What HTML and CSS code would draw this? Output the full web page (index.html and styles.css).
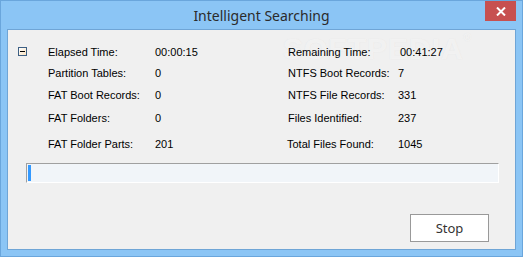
FILE: index.html
```html
<!DOCTYPE html>
<html lang="en">
<head>
    <meta charset="UTF-8">
    <title>Intelligent Searching</title>
    <link rel="stylesheet" href="styles.css">
</head>
<body>
    <div class="window">
        <div class="titlebar">
            <div class="title">Intelligent Searching</div>
            <div class="close-btn">
                <svg width="10" height="9" viewBox="0 0 10 9">
                    <path d="M1 0.5 L9 8.5 M9 0.5 L1 8.5" stroke="#fff" stroke-width="2"/>
                </svg>
            </div>
        </div>

        <div class="client">
            <div class="watermark">SOFTPEDIA<sup>®</sup></div>

            <div class="stats">
                <span class="toggle"><span class="toggle-minus"></span></span>
                <span class="label">Elapsed Time:</span>
                <span class="value">00:00:15</span>
                <span class="label">Remaining Time:</span>
                <span class="value value-shift">00:41:27</span>

                <span></span>
                <span class="label">Partition Tables:</span>
                <span class="value">0</span>
                <span class="label">NTFS Boot Records:</span>
                <span class="value">7</span>

                <span></span>
                <span class="label">FAT Boot Records:</span>
                <span class="value">0</span>
                <span class="label">NTFS File Records:</span>
                <span class="value">331</span>

                <span></span>
                <span class="label">FAT Folders:</span>
                <span class="value">0</span>
                <span class="label">Files Identified:</span>
                <span class="value">237</span>

                <span></span>
                <span class="label">FAT Folder Parts:</span>
                <span class="value">201</span>
                <span class="label label-shift">Total Files Found:</span>
                <span class="value">1045</span>
            </div>

            <div class="progress">
                <div class="progress-chunk"></div>
            </div>

            <div class="actions">
                <button class="stop-btn">Stop</button>
            </div>
        </div>
    </div>
</body>
</html>
```

FILE: styles.css
```css
* {
    margin: 0;
    padding: 0;
    box-sizing: border-box;
}

body {
    background: #ffffff;
    font-family: "Liberation Sans", Arial, sans-serif;
}

.window {
    width: 523px;
    height: 257px;
    background-color: #8bc5f5;
    border: 1px solid #6aa6dc;
    display: flex;
    flex-direction: column;
}

.titlebar {
    height: 28px;
    display: flex;
    align-items: flex-start;
}

.title {
    flex: 1;
    padding-left: 37px;
    text-align: center;
    font-family: "Noto Sans", "Open Sans", sans-serif;
    font-size: 14px;
    line-height: 30px;
    color: #2b2b2b;
}

.close-btn {
    width: 31px;
    height: 20px;
    margin-right: 6px;
    background-color: #c75050;
    display: flex;
    align-items: center;
    justify-content: center;
}

.client {
    position: relative;
    margin: 0 6px;
    height: 221px;
    background-color: #f0f0f0;
    border: 1px solid #6fa5d6;
    padding-top: 12px;
}

.watermark {
    position: absolute;
    left: 275px;
    top: 2px;
    font-family: "Liberation Sans", Arial, sans-serif;
    font-weight: bold;
    font-size: 30px;
    letter-spacing: 1px;
    color: rgba(255, 255, 255, 0.55);
    text-shadow: 0 0 1px rgba(200, 200, 200, 0.35);
    pointer-events: none;
}

.watermark sup {
    font-size: 10px;
    vertical-align: top;
}

.stats {
    position: relative;
    margin-left: 10px;
    display: grid;
    grid-template-columns: 30px 107px 133px 110px auto;
    grid-template-rows: 21px 21px 23px 23px 29px;
    align-items: center;
    font-size: 11px;
    color: #000;
}

.label,
.value {
    line-height: 13px;
    white-space: nowrap;
}

.value-shift {
    padding-left: 2px;
}

.label-shift {
    margin-left: -1px;
}

.toggle {
    width: 9px;
    height: 9px;
    margin-top: -3px;
    border: 1px solid #3d5f84;
    background: linear-gradient(135deg, #ffffff 0%, #fbe3c0 100%);
    display: flex;
    align-items: center;
    justify-content: center;
}

.toggle-minus {
    width: 5px;
    height: 1px;
    background-color: #000;
}

.progress {
    margin: 4px 16px 0 18px;
    height: 20px;
    background-color: #f1f5f9;
    border-top: 1px solid #a0a0a0;
    border-left: 1px solid #a0a0a0;
    border-bottom: 1px solid #ffffff;
    border-right: 1px solid #ffffff;
    padding: 1px;
}

.progress-chunk {
    width: 3px;
    height: 16px;
    background-color: #3399ff;
}

.actions {
    display: flex;
    justify-content: flex-end;
    margin-top: 31px;
    padding-right: 26px;
}

.stop-btn {
    width: 79px;
    height: 28px;
    background-color: #ffffff;
    border: 1px solid #999999;
    font-family: "Noto Sans", "Open Sans", sans-serif;
    font-size: 13px;
    color: #333;
}
```
